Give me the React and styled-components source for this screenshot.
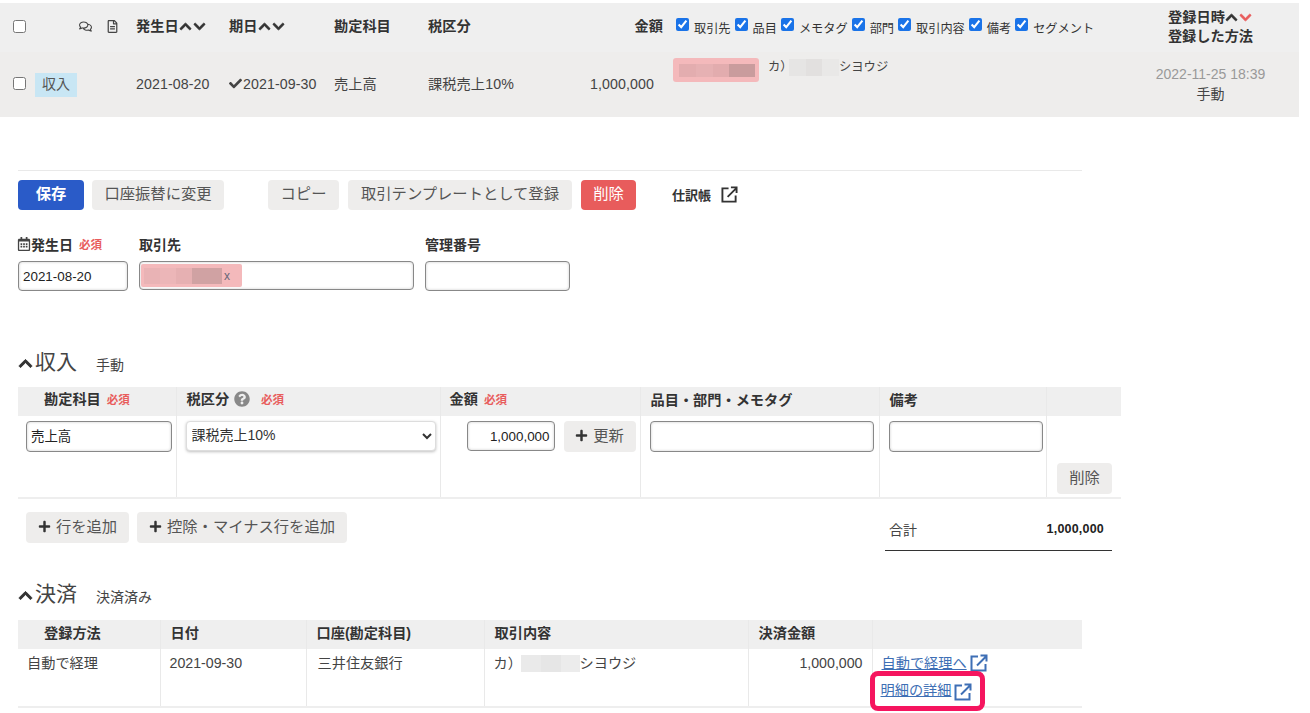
import React from "react";
import styled, { createGlobalStyle } from "styled-components";
import { FaChevronUp, FaChevronDown, FaCheck, FaPlus, FaQuestionCircle, FaRegCalendarAlt, FaRegComments, FaRegFileAlt } from "react-icons/fa";

const Global = createGlobalStyle`
  html, body { margin: 0; padding: 0; background: #fff; }
  body { font-family: "Liberation Sans", "Noto Sans CJK JP", sans-serif; font-size: 14px; color: #333; overflow: hidden; }
  * { box-sizing: border-box; }
`;

const Page = styled.div`
  width: 1310px; height: 713px; overflow: hidden; padding-top: 3px;
`;
const Band = styled.div` width: 1299px; background: #eeedec; `;
const BandRow = styled.div`
  display: grid;
  grid-template-columns: 22px 101px 93px 105px 94px 142px 100px 452px 177px;
  padding-left: 13px;
  align-items: center;
  height: ${p => p.$h}px;
  background: ${p => p.$bg};
`;
const Box = styled.input.attrs({ type: "checkbox" })`
  width: 13px; height: 13px; margin: 0; accent-color: #1a73e8; flex: none;
`;
const RowBox = styled(Box)` margin-bottom: 2px; `;
const HeadText = styled.div`
  font-weight: 700; font-size: 14.2px; line-height: 20px; color: #333; display: flex; align-items: center; white-space: nowrap;
  padding-bottom: 3px;
  justify-content: ${p => p.$end ? "flex-end" : "flex-start"};
  padding-right: ${p => p.$end ? "7px" : "0"};
`;
const Chev = styled.span`
  display: inline-flex; font-size: 13px; width: 14px; justify-content: center; color: ${p => p.$red ? "#e85c5c" : "#333"};
  svg { stroke: currentColor; stroke-width: 30; }
`;
const IconCell = styled.div`
  display: flex; justify-content: flex-start; gap: 14px; padding-left: 44px; padding-bottom: 3px; color: #444; font-size: 13px; align-items: center;
`;
const Checks = styled.div`
  display: flex; align-items: center; padding-left: 6px; white-space: nowrap; height: 100%; padding-bottom: 6px;
`;
const CheckItem = styled.label`
  display: flex; align-items: center; font-size: 12.2px; color: #333; margin-right: 4px;
  span { margin-left: 5px; margin-top: 6px; }
`;
const RegHead = styled.div`
  font-weight: 700; font-size: 14.2px; text-align: center; line-height: 19px; color: #333; padding-bottom: 1px;
  div { display: flex; justify-content: center; align-items: center; }
`;
const TypeTag = styled.span`
  display: inline-block; background: #c8e6f4; color: #555; font-size: 14px; padding: 0 7px; height: 24px; line-height: 22px;
`;
const DataText = styled.div`
  font-size: 14.2px; line-height: 20px; letter-spacing: 0.1px; color: #444; white-space: nowrap; display: flex; align-items: center;
  padding-bottom: 2px;
  justify-content: ${p => p.$end ? "flex-end" : "flex-start"};
  padding-right: ${p => p.$end ? "16px" : "0"};
  svg { font-size: 13px; margin-right: 1px; }
`;
const PartnerCell = styled.div`
  display: flex; align-items: flex-start; height: 100%; padding: 6px 0 0 3px;
`;
const PinkChip = styled.span`
  display: flex; align-items: center; width: 86px; height: 24px; background: #f4b9bb; border-radius: 3px; padding-left: 6px;
`;
const Mosaic = styled.span`
  display: inline-flex; height: ${p => p.$h}px; flex: none;
`;
const Pixel = styled.span`
  display: block; width: ${p => p.$w}px; background: ${p => p.$c};
`;
const KanaText = styled.span`
  font-size: ${p => p.$size}px; line-height: 20px; color: #444; display: inline-flex; align-items: center; white-space: nowrap;
  margin-left: ${p => p.$ml || 0}px; margin-top: ${p => p.$mt || 0}px;
`;
const KanaHead = styled.span` display: inline-block; width: ${p => p.$w}px; `;
const RegData = styled.div`
  text-align: center; font-size: 14px; line-height: 20px; color: #999; padding-bottom: 2px;
  div { color: #444; }
`;

const Form = styled.div` padding-left: 18px; `;
const Divider = styled.div` width: 1064px; height: 1px; background: #e9e9e9; margin-top: 53px; `;
const Toolbar = styled.div` display: flex; align-items: center; margin-top: 8px; height: 31px; `;
const Btn = styled.button`
  height: ${p => p.$h || 31}px; border: 0; border-radius: 4px; padding: 0 0 5px; font-family: inherit; font-size: 15.3px; color: #555;
  background: #eeedec; width: ${p => p.$w}px; margin-left: ${p => p.$ml || 0}px; flex: none;
  display: inline-flex; align-items: center; justify-content: center; white-space: nowrap;
  svg { font-size: 13px; margin-right: 5px; color: #333; margin-top: 3px; }
`;
const PrimaryBtn = styled(Btn)` background: #2a5bc8; color: #fff; font-weight: 700; `;
const DangerBtn = styled(Btn)` background: #e85c5c; color: #fff; `;
const Ledger = styled.span`
  display: inline-flex; align-items: center; margin-left: 36px; font-size: 13px; font-weight: 700; color: #333;
  svg { margin-left: 10px; }
`;
const Fields = styled.div` display: flex; margin-top: 24px; gap: 11px; `;
const Field = styled.div` width: ${p => p.$w}px; `;
const FieldLabel = styled.div`
  height: 20px; font-size: 14px; font-weight: 700; color: #333; display: flex; align-items: center; white-space: nowrap;
  svg { font-size: 14px; color: #444; margin-left: -1px; }
`;
const Req = styled.span`
  font-size: 11.5px; font-weight: 700; color: #e85c5c; margin-left: ${p => p.$ml || 6}px;
`;
const inputStyle = `
  display: block; border: 1px solid #888; border-radius: 4px; background: #fff; font-family: inherit; font-size: 13.4px; color: #222;
  box-shadow: inset 0 0 3px rgba(0,0,0,.2); outline: 0;
`;
const TextBox = styled.input`
  ${inputStyle}
  width: ${p => p.$w}px; height: ${p => p.$h || 31}px; padding: ${p => p.$digits ? "1px 4px 0" : "0 4px 3px"}; margin-top: ${p => p.$mt || 0}px;
  text-align: ${p => p.$right ? "right" : "left"};
`;
const TagBox = styled.div`
  ${inputStyle}
  width: 100%; height: 29px; margin-top: 7px; padding: 2px 1px;
`;
const Tag = styled.span`
  display: flex; align-items: center; width: 101px; height: 23px; background: #f4b9bb; border-radius: 2px; padding-left: 3px; font-size: 12px; color: #667;
  i { font-style: normal; margin-left: 2px; }
`;
const Section = styled.div`
  display: flex; align-items: center; height: 30px; margin-top: ${p => p.$mt}px; color: #444;
  > svg { font-size: 15px; color: #333; margin-top: 6px; stroke: currentColor; stroke-width: 30; }
`;
const SectionTitle = styled.span` font-size: 21px; margin-left: 2px; `;
const SectionNote = styled.span` font-size: 14px; margin-left: 19px; margin-top: 8px; color: #444; `;

const Table = styled.table`
  border-collapse: collapse; table-layout: fixed; width: ${p => p.$w}px; margin-top: ${p => p.$mt}px;
  border-bottom: 2px solid #eee;
`;
const Th = styled.th`
  background: #efefef; height: 29px; font-size: 14.2px; font-weight: 700; text-align: left; color: #333; padding: 0 0 4px ${p => p.$pl ?? 10}px;
  border-left: 1px solid #e9e9e9; white-space: nowrap; line-height: 20px;
  &:first-child { border-left: 0; }
  svg { color: #888; font-size: 16px; vertical-align: -3px; margin-left: 5px; }
`;
const Td = styled.td`
  vertical-align: top; height: ${p => p.$h}px; padding: ${p => p.$pad || "5px 0 0 9px"}; border-left: 1px solid #e9e9e9; font-size: 14.2px; line-height: 20px; color: #444;
  &:first-child { border-left: 0; }
  text-align: ${p => p.$right ? "right" : "left"};
`;
const AmountRow = styled.div` display: flex; gap: 9px; padding-left: 17px; `;
const Picker = styled.select`
  display: block; width: 250px; height: 30px; border: 1px solid #ddd; border-radius: 4px; background: #fff; font-family: inherit; font-size: 14px; color: #333;
  box-shadow: 0 1px 3px rgba(0,0,0,.25); padding: 0 0 2px 1px; outline: 0;
`;
const RightAction = styled.div` display: flex; justify-content: flex-end; padding-top: 42px; padding-right: 9px; `;
const Footer = styled.div` display: flex; width: 1094px; margin-top: 13px; padding-left: 8px; align-items: flex-start; `;
const Total = styled.div`
  width: 227px; height: 39px; margin-left: auto; border-bottom: 1px solid #333; display: flex; justify-content: space-between; align-items: center;
  padding: 0 8px 5px 4px; font-size: 14px; color: #444;
  b { color: #222; font-size: 12.5px; letter-spacing: .2px; }
`;
const LinkLine = styled.div`
  display: flex; align-items: center; height: ${p => p.$h}px; padding-left: ${p => p.$pl}px; color: #3e6fb5; font-size: 14.2px;
  a { color: #3e6fb5; text-decoration: underline; }
  svg { margin-left: 3px; margin-top: ${p => p.$iconTop || 0}px; }
`;
const LinkCell = styled.div` position: relative; margin-top: -3px; padding-top: 5px; `;
const Highlight = styled.div`
  position: absolute; left: -3px; top: 25px; width: 115px; height: 40px; border: 5px solid #f5155f; border-radius: 8px; pointer-events: none;
`;

const Ext = ({ size = 18, color = "#444", sw = 2 }) => (
  <svg width={size} height={size} viewBox="0 0 18 18" fill="none" stroke={color} strokeWidth={sw}>
    <path d="M8 2.5H1.5v14h14V10" />
    <path d="M7 11.5L16 2.5M10.5 1.5h6v6" />
  </svg>
);

const Up = () => <Chev><FaChevronUp /></Chev>;
const Down = ({ red }) => <Chev $red={red}><FaChevronDown /></Chev>;

const PixelStrip = ({ h, ws }) => (
  <Mosaic $h={h}>
    {ws.map(([w, c], i) => <Pixel key={i} $w={w} $c={c} />)}
  </Mosaic>
);

const checkLabels = ["取引先", "品目", "メモタグ", "部門", "取引内容", "備考", "セグメント"];

export default function App() {
  return (
    <Page>
      <Global />
      <Band>
        <BandRow $h={49} $bg="#efefef">
          <RowBox />
          <IconCell><FaRegComments /><FaRegFileAlt /></IconCell>
          <HeadText>発生日<Up /><Down /></HeadText>
          <HeadText>期日<Up /><Down /></HeadText>
          <HeadText>勘定科目</HeadText>
          <HeadText>税区分</HeadText>
          <HeadText $end>金額</HeadText>
          <Checks>
            {checkLabels.map(l => (
              <CheckItem key={l}><Box defaultChecked /><span>{l}</span></CheckItem>
            ))}
          </Checks>
          <RegHead>
            <div>登録日時<Up /><Down red /></div>
            <div>登録した方法</div>
          </RegHead>
        </BandRow>
        <BandRow $h={65} $bg="#eeedec">
          <RowBox />
          <div><TypeTag>収入</TypeTag></div>
          <DataText>2021-08-20</DataText>
          <DataText><FaCheck />2021-09-30</DataText>
          <DataText>売上高</DataText>
          <DataText>課税売上10%</DataText>
          <DataText $end>1,000,000</DataText>
          <PartnerCell>
            <PinkChip>
              <PixelStrip h={13} ws={[[17, "#e3adaf"], [17, "#e6b1b3"], [16, "#e2acae"], [26, "#c99c9d"]]} />
            </PinkChip>
            <KanaText $size={12.3} $ml={9} $mt={-1}>
              <KanaHead $w={21}>カ）</KanaHead>
              <PixelStrip h={17} ws={[[17, "#e6e5e4"], [16, "#e2e0df"], [17, "#e9e8e7"]]} />
              <span>シヨウジ</span>
            </KanaText>
          </PartnerCell>
          <RegData>2022-11-25 18:39<div>手動</div></RegData>
        </BandRow>
      </Band>
      <Form>
        <Divider />
        <Toolbar>
          <PrimaryBtn $w={66} $h={30}>保存</PrimaryBtn>
          <Btn $w={132} $h={30} $ml={8}>口座振替に変更</Btn>
          <Btn $w={71} $h={30} $ml={44}>コピー</Btn>
          <Btn $w={224} $h={30} $ml={9}>取引テンプレートとして登録</Btn>
          <DangerBtn $w={55} $h={30} $ml={9}>削除</DangerBtn>
          <Ledger>仕訳帳<Ext size={17} color="#333" /></Ledger>
        </Toolbar>
        <Fields>
          <Field $w={110}>
            <FieldLabel><FaRegCalendarAlt />発生日<Req>必須</Req></FieldLabel>
            <TextBox $w={110} $h={30} $mt={7} $digits defaultValue="2021-08-20" />
          </Field>
          <Field $w={275}>
            <FieldLabel>取引先</FieldLabel>
            <TagBox>
              <Tag>
                <PixelStrip h={16} ws={[[16, "#e9b3b5"], [16, "#ecb6b8"], [16, "#e6b0b2"], [30, "#d0a2a3"]]} />
                <i>x</i>
              </Tag>
            </TagBox>
          </Field>
          <Field $w={145}>
            <FieldLabel>管理番号</FieldLabel>
            <TextBox $w={145} $h={30} $mt={7} />
          </Field>
        </Fields>

        <Section $mt={54}>
          <FaChevronUp />
          <SectionTitle>収入</SectionTitle>
          <SectionNote>手動</SectionNote>
        </Section>
        <Table $w={1103} $mt={12}>
          <colgroup>
            <col style={{ width: 158 }} /><col style={{ width: 264 }} /><col style={{ width: 200 }} />
            <col style={{ width: 239 }} /><col style={{ width: 167 }} /><col style={{ width: 75 }} />
          </colgroup>
          <thead>
            <tr>
              <Th $pl={26}>勘定科目<Req>必須</Req></Th>
              <Th>税区分<FaQuestionCircle /><Req $ml={11}>必須</Req></Th>
              <Th $pl={9}>金額<Req>必須</Req></Th>
              <Th>品目・部門・メモタグ</Th>
              <Th>備考</Th>
              <Th />
            </tr>
          </thead>
          <tbody>
            <tr>
              <Td $h={82} $pad="5px 0 0 8px"><TextBox $w={146} defaultValue="売上高" /></Td>
              <Td>
                <Picker defaultValue="a"><option value="a">課税売上10%</option></Picker>
              </Td>
              <Td>
                <AmountRow>
                  <TextBox $w={88} $h={30} $right $digits defaultValue="1,000,000" />
                  <Btn $w={72}><FaPlus />更新</Btn>
                </AmountRow>
              </Td>
              <Td><TextBox $w={224} /></Td>
              <Td><TextBox $w={154} /></Td>
              <Td $pad="5px 0 0 0"><RightAction><Btn $w={55}>削除</Btn></RightAction></Td>
            </tr>
          </tbody>
        </Table>
        <Footer>
          <Btn $w={103}><FaPlus />行を追加</Btn>
          <Btn $w={210} $ml={8}><FaPlus />控除・マイナス行を追加</Btn>
          <Total><span>合計</span><b>1,000,000</b></Total>
        </Footer>

        <Section $mt={26}>
          <FaChevronUp />
          <SectionTitle>決済</SectionTitle>
          <SectionNote>決済済み</SectionNote>
        </Section>
        <Table $w={1064} $mt={13}>
          <colgroup>
            <col style={{ width: 142 }} /><col style={{ width: 146 }} /><col style={{ width: 178 }} />
            <col style={{ width: 264 }} /><col style={{ width: 124 }} /><col style={{ width: 210 }} />
          </colgroup>
          <thead>
            <tr>
              <Th $pl={26}>登録方法</Th>
              <Th>日付</Th>
              <Th>口座(勘定科目)</Th>
              <Th>取引内容</Th>
              <Th>決済金額</Th>
              <Th />
            </tr>
          </thead>
          <tbody>
            <tr>
              <Td $h={58} $pad="4px 0 0 9px">自動で経理</Td>
              <Td $pad="4px 0 0 9px">2021-09-30</Td>
              <Td $pad="4px 0 0 11px">三井住友銀行</Td>
              <Td $pad="4px 0 0 9px">
                <KanaText $size={14.2}>
                  <KanaHead $w={27}>カ）</KanaHead>
                  <PixelStrip h={17} ws={[[20, "#eaeaea"], [20, "#e6e6e6"], [19, "#ececec"]]} />
                  <span>シヨウジ</span>
                </KanaText>
              </Td>
              <Td $right $pad="4px 9px 0 0">1,000,000</Td>
              <Td $pad="0">
                <LinkCell>
                  <LinkLine $h={24} $pl={9}><a href="#a">自動で経理へ</a><Ext size={18} color="#3e6fb5" /></LinkLine>
                  <LinkLine $h={30} $pl={8} $iconTop={4}><a href="#b">明細の詳細</a><Ext size={18} color="#3e6fb5" /></LinkLine>
                  <Highlight />
                </LinkCell>
              </Td>
            </tr>
          </tbody>
        </Table>
      </Form>
    </Page>
  );
}
